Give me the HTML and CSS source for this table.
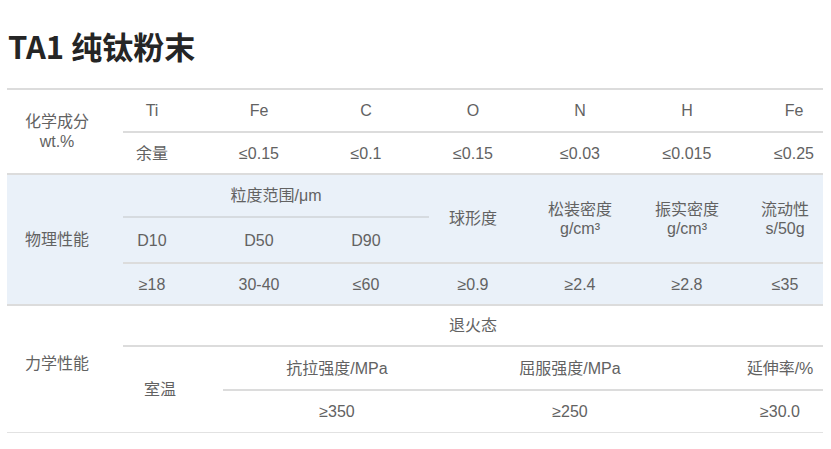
FILE: index.html
```html
<!DOCTYPE html>
<html lang="zh-CN">
<head>
<meta charset="utf-8">
<title>TA1 纯钛粉末</title>
<link rel="stylesheet" href="styles.css">
</head>
<body>
<h1 class="title">TA1 纯钛粉末</h1>
<div class="spec">
  <section class="group">
    <div class="label">化学成分<br>wt.%</div>
    <div class="body grid-chem">
      <div class="cell">Ti</div>
      <div class="cell">Fe</div>
      <div class="cell">C</div>
      <div class="cell">O</div>
      <div class="cell">N</div>
      <div class="cell">H</div>
      <div class="cell">Fe</div>
      <div class="cell top">余量</div>
      <div class="cell top">≤0.15</div>
      <div class="cell top">≤0.1</div>
      <div class="cell top">≤0.15</div>
      <div class="cell top">≤0.03</div>
      <div class="cell top">≤0.015</div>
      <div class="cell top">≤0.25</div>
    </div>
  </section>
  <section class="group phys">
    <div class="label">物理性能</div>
    <div class="body grid-phys">
      <div class="cell size">粒度范围/μm</div>
      <div class="cell head">球形度</div>
      <div class="cell head">松装密度<br>g/cm³</div>
      <div class="cell head">振实密度<br>g/cm³</div>
      <div class="cell head shift">流动性<br>s/50g</div>
      <div class="cell">D10</div>
      <div class="cell">D50</div>
      <div class="cell">D90</div>
      <div class="cell top">≥18</div>
      <div class="cell top">30-40</div>
      <div class="cell top">≤60</div>
      <div class="cell top">≥0.9</div>
      <div class="cell top">≥2.4</div>
      <div class="cell top">≥2.8</div>
      <div class="cell top shift">≤35</div>
    </div>
  </section>
  <section class="group mech">
    <div class="label label-mech">力学性能</div>
    <div class="body grid-mech">
      <div class="cell anneal">退火态</div>
      <div class="cell room">室温</div>
      <div class="cell wide under">抗拉强度/MPa</div>
      <div class="cell wide under">屈服强度/MPa</div>
      <div class="cell wide under">延伸率/%</div>
      <div class="cell wide">≥350</div>
      <div class="cell wide">≥250</div>
      <div class="cell wide">≥30.0</div>
    </div>
  </section>
</div>
</body>
</html>
```

FILE: styles.css
```css
* {
  box-sizing: border-box;
}

body {
  margin: 0;
  background: #fff;
  font-family: "Liberation Sans", "Noto Sans CJK SC", sans-serif;
  font-size: 16px;
  color: #626262;
}

.title {
  margin: 0 0 0 8px;
  padding-top: 26px;
  line-height: 40px;
  font-family: "Noto Sans CJK SC", "Liberation Sans", sans-serif;
  font-size: 31px;
  font-weight: 700;
  color: #252525;
}

.spec {
  margin: 22px 0 0 7px;
  width: 816px;
  overflow: hidden;
}

.group {
  display: flex;
  border-top: 2px solid #dcdcdc;
}

.group.phys {
  background: #eaf1f9;
}

.group.mech {
  border-bottom: 1px solid #e2e2e2;
}

.label {
  flex: none;
  width: 116px;
  padding-right: 16px;
  display: flex;
  align-items: center;
  justify-content: center;
  text-align: center;
  line-height: 20px;
  white-space: nowrap;
}

.label-mech {
  padding-bottom: 10px;
}

.body {
  flex: none;
  display: grid;
}

.cell {
  display: flex;
  align-items: center;
  justify-content: center;
  text-align: center;
  line-height: 19px;
  white-space: nowrap;
  padding-right: 49px;
}

.top {
  border-top: 2px solid #dcdcdc;
}

.grid-chem {
  grid-template-columns: repeat(7, 107px);
  grid-template-rows: 41px 42px;
}

.grid-phys {
  grid-template-columns: repeat(7, 107px);
  grid-template-rows: 43px 44px 42px;
}

.size {
  grid-column: 1 / 4;
  grid-row: 1;
  margin-right: 15px;
  padding-right: 0;
  border-bottom: 2px solid #d6dbe0;
}

.head {
  grid-row: 1 / 3;
}

.shift {
  padding-right: 67px;
}

.grid-mech {
  grid-template-columns: 100px 228px 238px 182px;
  grid-template-rows: 41px 44px 41px;
}

.anneal {
  grid-column: 1 / -1;
  grid-row: 1;
  padding-right: 48px;
  border-bottom: 2px solid #dcdcdc;
}

.room {
  grid-column: 1;
  grid-row: 2 / 4;
  padding-right: 26px;
}

.wide {
  padding-right: 0;
}

.under {
  border-bottom: 2px solid #dcdcdc;
}
```
